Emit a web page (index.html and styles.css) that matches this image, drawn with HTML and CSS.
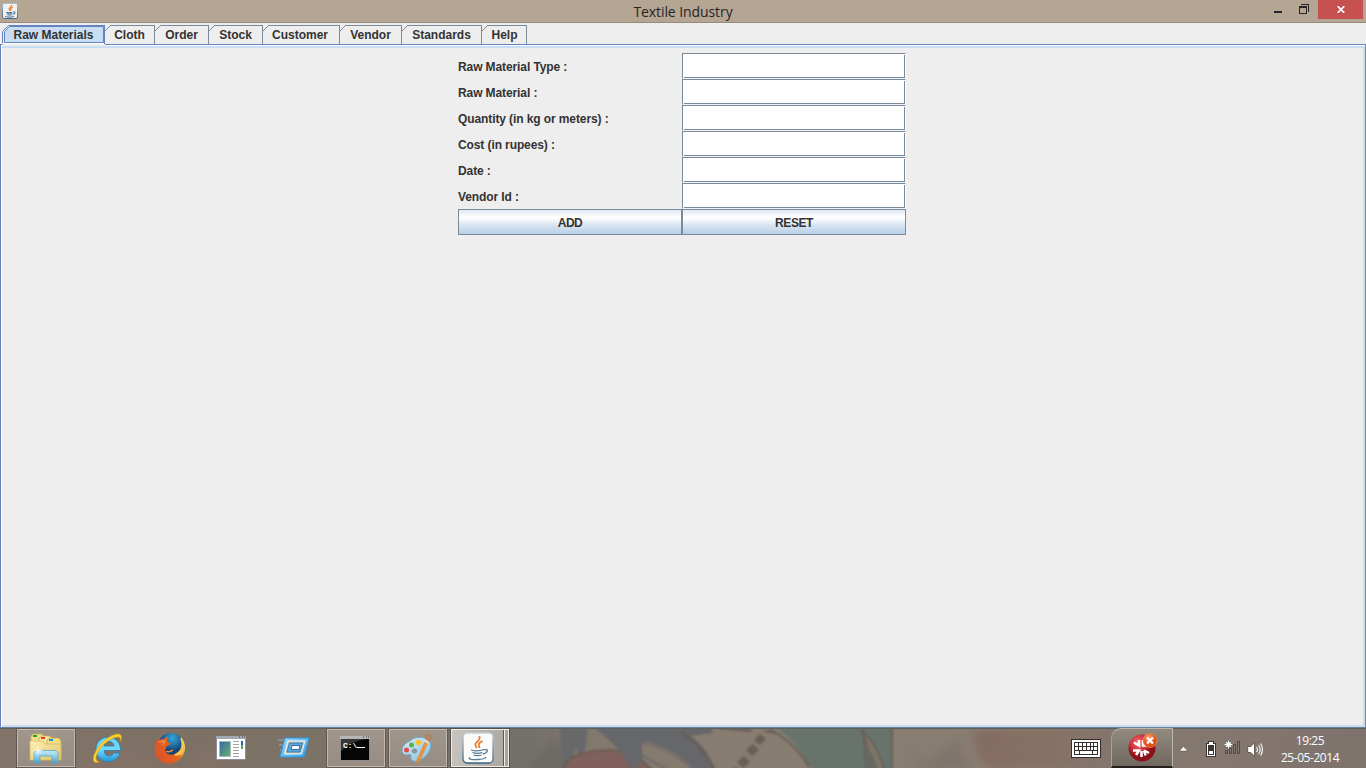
FILE: index.html
```html
<!DOCTYPE html>
<html lang="en">
<head>
<meta charset="utf-8">
<title>Textile Industry</title>
<link rel="stylesheet" href="styles.css">
</head>
<body>
<div class="screen">
  <header class="titlebar">
    <svg class="app-icon" width="16" height="16" viewBox="0 0 16 16">
      <defs><linearGradient id="jb" x1="0" y1="0" x2="0" y2="1"><stop offset="0" stop-color="#a9bfd0"/><stop offset="1" stop-color="#466984"/></linearGradient></defs>
      <rect x=".5" y=".5" width="15" height="15" rx="1.5" fill="#f0f0ee" stroke="url(#jb)"/>
      <path d="M9.7 2C10 4 6.2 4.6 7.2 6.3L8.4 8M11 4.2C8.8 5 8.2 6 9.1 7.8" fill="none" stroke="#e77b32" stroke-width="1.2"/>
      <path d="M4 9.5h6.500M4.700 10.800h5.600M5.400 12h4.300M3 13.500c2.500.6 7 .6 9-.3M11 9c3-1 2.500 2-.2 2.300" fill="none" stroke="#557d9d" stroke-width="1.100"/>
    </svg>
    <h1 class="title">Textile Industry</h1>
    <div class="win-buttons">
      <svg class="win-min" width="8" height="2"><path d="M0 0h8v2H0z" fill="#252525"/></svg>
      <svg class="win-max" width="10" height="10" shape-rendering="crispEdges"><path d="M0 2h8v8H0zM1 4v5h6V4zM2 0h8v8H9V1H2z" fill="#252525" fill-rule="evenodd"/></svg>
      <div class="win-close"><svg width="8" height="7" viewBox="0 0 8 7"><path d="M.7.2l6.6 6.6M7.3.2L.7 6.800" stroke="#fff" stroke-width="1.700"/></svg></div>
    </div>
  </header>

  <nav class="tabs">
    <div class="tab selected w-raw"><svg class="selected-shape" width="103" height="22"><path d="M.5 22V7.500L7.500.5H103V22z" fill="#eee"/><path d="M.5 19V7.500L6.500 1.500H103" fill="none" stroke="#6382bf"/><path d="M2.500 18.500V7.500L7.500 2.500H101.500V18.500z" fill="#c8ddf2" stroke="#6382bf"/><path d="M102.500 2v18" stroke="#6382bf"/><path d="M3 19.500h99" stroke="#fff"/><path d="M1 20.500h102" stroke="#eee"/></svg><span>Raw Materials</span></div>
    <div class="tab w-cloth"><svg class="corner" width="6" height="7"><path d="M0 6L5.500.5" stroke="#7a8a99"/></svg><span>Cloth</span></div>
    <div class="tab w-order"><svg class="corner" width="6" height="7"><path d="M0 6L5.500.5" stroke="#7a8a99"/></svg><span>Order</span></div>
    <div class="tab w-stock"><svg class="corner" width="6" height="7"><path d="M0 6L5.500.5" stroke="#7a8a99"/></svg><span>Stock</span></div>
    <div class="tab w-customer"><svg class="corner" width="6" height="7"><path d="M0 6L5.500.5" stroke="#7a8a99"/></svg><span>Customer</span></div>
    <div class="tab w-vendor"><svg class="corner" width="6" height="7"><path d="M0 6L5.500.5" stroke="#7a8a99"/></svg><span>Vendor</span></div>
    <div class="tab w-standards"><svg class="corner" width="6" height="7"><path d="M0 6L5.500.5" stroke="#7a8a99"/></svg><span>Standards</span></div>
    <div class="tab w-help"><svg class="corner" width="6" height="7"><path d="M0 6L5.500.5" stroke="#7a8a99"/></svg><span>Help</span></div>
  </nav>

  <main class="pane">
    <div class="form">
      <label>Raw Material Type :</label><div class="field"><i></i></div>
      <label>Raw Material :</label><div class="field"><i></i></div>
      <label>Quantity (in kg or meters) :</label><div class="field"><i></i></div>
      <label>Cost (in rupees) :</label><div class="field"><i></i></div>
      <label>Date :</label><div class="field"><i></i></div>
      <label>Vendor Id :</label><div class="field"><i></i></div>
      <button class="push">ADD</button><button class="push">RESET</button>
    </div>
  </main>

  <footer class="taskbar">
    <svg class="wallpaper" width="1366" height="40" viewBox="0 0 1366 40">
      <defs>
        <linearGradient id="tb"><stop offset="0" stop-color="#83746a"/><stop offset=".12" stop-color="#7d7065"/><stop offset=".24" stop-color="#7b7366"/><stop offset=".39" stop-color="#74706a"/><stop offset=".42" stop-color="#80776c"/><stop offset=".47" stop-color="#867c70"/><stop offset=".73" stop-color="#897e72"/><stop offset=".79" stop-color="#84776c"/><stop offset=".9" stop-color="#83776f"/><stop offset="1" stop-color="#7e726d"/></linearGradient>
        <linearGradient id="skin"><stop offset="0" stop-color="#836c60"/><stop offset=".5" stop-color="#877164"/><stop offset="1" stop-color="#83766d"/></linearGradient>
        <filter id="soft" x="-5%" y="-20%" width="110%" height="140%" color-interpolation-filters="sRGB"><feGaussianBlur stdDeviation="1.100"/></filter>
        <filter id="softer" x="-20%" y="-50%" width="140%" height="200%" color-interpolation-filters="sRGB"><feGaussianBlur stdDeviation="5"/></filter>
      </defs>
      <rect width="1366" height="40" fill="url(#tb)"/>
      <path d="M60 44l60-25 80 25zM180 44l30-30 25 30z" fill="#8c7267" opacity=".4" filter="url(#softer)"/>
      <path d="M525 46l30-40 20 40z" fill="#696762" opacity=".7" filter="url(#softer)"/>
      <g filter="url(#soft)">
        <path d="M560 -3h28l-3 25-7 8-1-12-10 24-5 2z" fill="#67686a"/>
        <path d="M560 46l9-15c20-11 50-11 68-4l19 19z" fill="#80605a" stroke="#6d5b52" stroke-width="2"/>
        <path d="M594 -3h118v8l-22 3c15 10 20 20 27 38h-18c-17-19-32-27-54-33l-4 24-10 4c-8-17-22-31-37-41z" fill="#65676b"/>
        <path d="M641 14c24 5 41 15 57 32h-23l-34-19z" fill="#847a6d" stroke="#69656a" stroke-width="1.500"/>
        <path d="M681 4c15 9 26 22 36 42" fill="none" stroke="#6b5a51" stroke-width="2"/>
        <path d="M719 0l33 3-14-5zM764 3l12 2" fill="#6c5e58" stroke="#6c5e58" stroke-width="2"/>
        <path d="M754 12l6-6 6 5-6 6zM746 22l7-6 6 6-7 6zM737 34l7-6 6 6-7 6zM729 44l6-5 5 4-4 5z" fill="#6a5e55"/>
        <path d="M774 -3h118v50h-79c-9-20-18-34-39-50z" fill="#67736b"/>
        <path d="M768 0c24 13 35 28 45 46M863 2l4 44M892 -2v48" fill="none" stroke="#665b54" stroke-width="1.500"/>
        <path d="M861 2c12 10 20 26 24 44h-16c2-14-1-30-8-44z" fill="#7e746a" stroke="#665b54" stroke-width="1.200"/>
        <path d="M871 24c4 7 6 13 6 22h-9z" fill="#66685f"/>
        <path d="M808 44l2-7 5 7z" fill="#8b7568"/>
      </g>
      <path d="M974 0h140v40H990l-14-13z" fill="url(#skin)" filter="url(#softer)"/>
      <path d="M910 24l12 18h55l-25-27-25 20zM949 14l12-3 2 8-8 3z" fill="#7a6e68" opacity=".6" filter="url(#softer)"/>
      <path d="M0 .5h1366" stroke="#5b605f"/>
    </svg>

    <div class="tasks">
      <div class="task open">
        <svg class="explorer" width="34" height="32" viewBox="0 0 34 32">
          <defs><linearGradient id="fo" x1="0" y1="0" x2="1" y2="1"><stop offset="0" stop-color="#fff1b5"/><stop offset="1" stop-color="#e0c364"/></linearGradient><linearGradient id="st" x1="0" y1="0" x2="0" y2="1"><stop offset="0" stop-color="#c3ebf8"/><stop offset=".5" stop-color="#8fcbe5"/><stop offset="1" stop-color="#4c9dc4"/></linearGradient></defs>
          <path d="M3 4l2-2h9l2 3v22H3z" fill="#f5df8b" stroke="#cead57" stroke-width=".8"/>
          <path d="M11 6l2-2h9l2 3v20H11z" fill="#f8e8a4" stroke="#cead57" stroke-width=".8"/>
          <path d="M19 8l2-2h10l2 3v19H19z" fill="#f2dc86" stroke="#c9a850" stroke-width=".8"/>
          <path d="M2 9h13l2 3h16v16H2z" fill="url(#fo)" stroke="#d5b75f" stroke-width=".8"/>
          <path d="M5 3h4v2H5z" fill="#15a526"/><path d="M13 5h4v2h-4z" fill="#d84224"/><path d="M21 7h4v2h-4z" fill="#1990dc"/>
          <path d="M6 31V20.500l2-2h20l2 2V31h-6v-7H12v7z" fill="url(#st)" stroke="#5ea7c6" stroke-width=".8"/>
          <path d="M10 14v9M5.500 18.500h9M7 15.500l6 6m0-6l-6 6" stroke="#fff" stroke-width=".8" opacity=".9"/>
        </svg>
      </div>
      <div class="task">
        <svg class="nudge" width="32" height="32" viewBox="0 0 32 32">
          <defs><linearGradient id="ie" x1="0" y1="0" x2="0" y2="1"><stop offset="0" stop-color="#6fd0f8"/><stop offset=".5" stop-color="#72d9fb"/><stop offset="1" stop-color="#2594d3"/></linearGradient></defs>
          <path d="M29.500 18.500H13c.5 6.500 7.500 7 9.500 2.500h6.500C25 34 5 32 5 17.500 5 1 30 1 29.500 18.500zM13 14h10c-.5-6-9-6-10 0z" fill="url(#ie)" stroke="#2583b5" stroke-width=".8"/>
          <path d="M8 30C2 32 1 27 4 21 8 11 20 2 27 2c4 0 4 4 2 8 1-4 0-5.500-3-5C19 6 9 14 6 22c-2 5-1 7 2 8z" fill="#ffd52c" stroke="#dba51e" stroke-width=".7"/>
        </svg>
      </div>
      <div class="task">
        <svg width="32" height="32" viewBox="0 0 32 32">
          <defs><radialGradient id="fx" cx=".55" cy=".2"><stop offset="0" stop-color="#38a7d9"/><stop offset="1" stop-color="#124479"/></radialGradient><linearGradient id="fr" x1="0" y1=".6" x2="1" y2=".2"><stop offset="0" stop-color="#dc5428"/><stop offset=".6" stop-color="#e4651e"/><stop offset="1" stop-color="#ffe36a"/></linearGradient></defs>
          <circle cx="17" cy="14" r="13" fill="url(#fx)"/>
          <path d="M3 6l1 3c2-2 4-2 6-2l4-3-1 5 4 3-4 2-2 4c1 6 9 6 14 1 4-4 4-9 2-14 6 7 5 17-1 22C17 36 2 31 1 19 0 14 2 11 3 6z" fill="url(#fr)"/>
          <path d="M27 6c3 9 0 15-6 17 5 0 7-2 8-5" fill="none" stroke="#f9c84e" stroke-width="1.500"/>
          <path d="M5 10l6-1-2 4M12 19c3 2 5 0 7-1" fill="none" stroke="#f08a42" stroke-width="1.500"/>
        </svg>
      </div>
      <div class="task">
        <svg class="nudge" width="32" height="28" viewBox="0 0 32 28">
          <defs><linearGradient id="gb" x1="0" y1="0" x2="1" y2="1"><stop offset="0" stop-color="#3767a5"/><stop offset="1" stop-color="#63b66d"/></linearGradient></defs>
          <path d="M1.500 2.500h29v23h-29z" fill="#fff" stroke="#8b9099"/><path d="M1 2h30v3H1z" fill="#a1a8b2"/><path d="M24 3h1m2 0h1m1 0h1" stroke="#39404b"/>
          <path d="M4.500 7.500h11v15h-11z" fill="url(#gb)" stroke="#a2bbb7"/>
          <path d="M18 7.500h6m-6 3h6m-6 3h6m-6 3h6m-6 3h6m-6 3h6" stroke="#a3a3a3"/><path d="M26 7h2v8h-2z" fill="#2861a1"/><path d="M26 11h2v4h-2z" fill="#4bab75"/>
        </svg>
      </div>
      <div class="task">
        <svg class="nudge" width="34" height="28" viewBox="0 0 34 28">
          <defs><linearGradient id="rn" x1="0" y1="0" x2="1" y2="1"><stop offset="0" stop-color="#a8dcf6"/><stop offset="1" stop-color="#2b9ff0"/></linearGradient></defs>
          <path d="M2 6h8M3 11h6M4 16h5M6 22h3" stroke="#8fb7c8" stroke-width="1.500" opacity=".6"/>
          <path d="M9 4h24l-5 19H4z" fill="url(#rn)" stroke="#3295d8"/><path d="M12 7h17l-3.500 13H8.500z" fill="#d3c8b8" stroke="#e7f8ff"/><path d="M13.500 9h13l-2.500 9H11z" fill="#5aacdf" stroke="#337dad"/><path d="M16 11.500h8l-1 4h-8z" fill="#fff" stroke="#356b9c"/>
        </svg>
      </div>
      <div class="task open">
        <svg class="nudge" width="32" height="28" viewBox="0 0 32 28">
          <path d="M1.500 2.500h29v24h-29z" fill="#050505" stroke="#8b8d91"/><path d="M1 2h30v3H1z" fill="#b5b7ba"/><path d="M24 3h1m2 0h1m1 0h1" stroke="#333"/><path d="M2 5h26Q14 6 2 17z" fill="#444" opacity=".8"/>
          <text x="4" y="14" class="cmd-text">C:\</text><path d="M18 13.500h8" stroke="#fff"/>
        </svg>
      </div>
      <div class="task open">
        <svg class="paint" width="34" height="34" viewBox="0 0 34 34">
          <defs><linearGradient id="pa" x1="0" y1="0" x2="1" y2="1"><stop offset="0" stop-color="#d9eefb"/><stop offset="1" stop-color="#8dbddb"/></linearGradient></defs>
          <path d="M10 10C14 5 27 5 30 11c3 7-4 17-13 19-4 1-7-1-6-5 0-3-3-1-5-1-7-1-4-11 4-14zM12 20c0 3 5 3 5 0s-5-3-5 0z" fill="url(#pa)" stroke="#6aaccf"/>
          <circle cx="6.500" cy="19" r="2.500" fill="#e44c3e"/><circle cx="11.500" cy="14" r="2.500" fill="#54b940"/><circle cx="18.500" cy="11.500" r="2.800" fill="#f8c12d"/>
          <path d="M25.500 10L17 29l-.5 4 3.500-4 8-18z" fill="#f29431" stroke="#cf7a2b" stroke-width=".6"/><path d="M24 3l3 1 2-3 1 3 4 1-5 6-4-3z" fill="#ae8662"/><path d="M25 8l4 3-1 2-4-3z" fill="#dfdcd4"/>
        </svg>
      </div>
      <div class="task current">
        <svg class="java" width="32" height="32" viewBox="0 0 32 32">
          <defs><linearGradient id="js" x1="0" y1="0" x2="0" y2="1"><stop offset="0" stop-color="#c3ced5"/><stop offset="1" stop-color="#34627f"/></linearGradient></defs>
          <rect x="1" y="1" width="30" height="30" rx="4" fill="#fbfbfa" stroke="url(#js)" stroke-width="1.300"/>
          <path d="M17.500 4c2 6-8 6-2.500 12M20.500 9c-6 3-3 4-3 7" fill="none" stroke="#e87728" stroke-width="1.700"/>
          <path d="M9 18c3 1 9 1 13-.5M10.500 20.500c3 1 7 1 10 0M11.500 23c3 1 5 1 8 0M8 25.500c-3 2 3 2.500 8 2 5 0 7-1 8-2.500M22 18c5-2 4 3-1 4" fill="none" stroke="#527995" stroke-width="1.300"/>
        </svg>
      </div>
    </div>

    <div class="tray">
      <svg class="keyboard" width="30" height="19" viewBox="0 0 30 19" shape-rendering="crispEdges">
        <rect width="30" height="19" rx="1" fill="#332e2b"/><rect x="1" y="1" width="28" height="17" fill="#fff"/><rect x="3" y="3" width="24" height="13" fill="#332e2b"/>
        <path d="M4 4h3v3H4zm4 0h3v3H8zm4 0h3v3h-3zm4 0h3v3h-3zm4 0h2v3h-2zm3 0h3v3h-3zM4 8h3v3H4zm4 0h3v3H8zm4 0h3v3h-3zm4 0h3v3h-3zm4 0h2v3h-2zm3 0h3v3h-3zM4 12h4v3H4zm5 0h12v3H9zm13 0h4v3h-4z" fill="#fff"/>
      </svg>
      <div class="notice">
        <svg width="32" height="32" viewBox="0 0 32 32">
          <defs><radialGradient id="rd" cx=".38" cy=".3"><stop offset="0" stop-color="#f4777b"/><stop offset=".6" stop-color="#d32f3a"/><stop offset="1" stop-color="#8e1019"/></radialGradient><radialGradient id="or" cx=".4" cy=".3"><stop offset="0" stop-color="#ffa26b"/><stop offset="1" stop-color="#e04c16"/></radialGradient></defs>
          <circle cx="16" cy="16" r="13.500" fill="url(#rd)"/>
          <path d="M8 10.500l5 3V8M7 18.500h6l-3 4.500M17 8v5.500h5M15.500 25v-6M18 18.500l5 2.500M18 18.500l1.500 5" fill="none" stroke="#fff" stroke-width="2.500"/>
          <circle cx="24" cy="8.500" r="7" fill="url(#or)" stroke="#f0895d" stroke-width=".7"/><path d="M21 5.500l6 6m0-6l-6 6" stroke="#fff" stroke-width="2.300"/>
        </svg>
      </div>
      <svg class="chevron" width="9" height="6"><path d="M.3 5L4.500.5 8.700 5z" fill="#fff" stroke="#514b48" stroke-width=".5"/></svg>
      <svg class="battery" width="10" height="16" viewBox="0 0 10 16" shape-rendering="crispEdges"><path d="M2 0h6v2h2v14H0V2h2z" fill="#3b3532"/><path d="M3 1h4v2h2v12H1V3h2z" fill="#fff"/><path d="M3 4h4v6H3z" fill="#3b3532"/><path d="M2 4h1v10H2zM7 4h1v10H7zM3 13h4v1H3z" fill="#3b3532"/></svg>
      <svg class="network" width="17" height="15" viewBox="0 0 17 15"><path d="M1.500 10.500h2v3h-2zM5.500 8.500h2v5h-2zM9.500 4.500h2v9h-2zM13.500 1.500h2v12h-2z" fill="#847b75" stroke="#4b4541" stroke-width=".9"/><path d="M4.500.5v8M.5 4.500h8M1.700 1.700l5.600 5.600m0-5.600L1.700 7.300" stroke="#4b4541" stroke-width="2.200"/><path d="M4.500.5v8M.5 4.500h8M2 2l5 5m0-5L2 7" stroke="#fff" stroke-width="1.300"/></svg>
      <svg class="speaker" width="17" height="15" viewBox="0 0 17 15"><path d="M.7 4.500h3L7.500.8v13.400L3.700 10.500h-3z" fill="#fff" stroke="#504945" stroke-width=".8"/><path d="M9.500 5q2 2.500 0 5M11.500 3q3.500 4.500 0 9M13.700 1.500q3.500 6 0 12" fill="none" stroke="#f3f1ef" stroke-width="1.200"/></svg>
      <div class="clock"><span class="time">19:25</span><span class="date">25-05-2014</span></div>
    </div>
  </footer>
</div>
</body>
</html>
```
FILE: styles.css
```css
* { box-sizing: border-box; }
body { margin: 0; overflow: hidden; font-family: "Liberation Sans", Arial, sans-serif; }
svg { display: block; flex: none; }
.screen { width: 1366px; height: 768px; display: flex; flex-direction: column; background: #eee; }

.titlebar { height: 23px; flex: none; display: grid; grid-template-columns: 180px 1fr 180px; background: #b5a593; border-bottom: 1px solid #998a7b; }
.app-icon { margin: 3px 0 0 2px; }
.title { margin: 0; padding-top: 1px; text-align: center; font: 400 14px/22px "Open Sans", "Noto Sans", sans-serif; letter-spacing: -.08px; color: #252525; }
.win-buttons { display: flex; }
.win-min { margin: 11px 0 0 88px; }
.win-max { margin: 4px 0 0 17px; }
.win-close { margin-left: 9px; width: 45px; height: 19px; background: #c75050; display: flex; align-items: center; justify-content: center; }

.tabs { height: 21px; flex: none; padding: 2px 0 0 2px; display: flex; }
.tab { position: relative; height: 19px; font-size: 12px; font-weight: bold; line-height: 21px; color: #333; border-right: 1px solid #7a8a99; text-align: center; white-space: nowrap; }
.tab:not(.selected)::before { content: ""; position: absolute; left: 5px; right: 0; top: 0; height: 1px; background: #7a8a99; }
.corner { position: absolute; left: 0; top: 0; }
.tab span { position: relative; }
.selected { border: 0; z-index: 1; }
.selected-shape { position: absolute; left: 0; top: -1px; }
.w-raw { width: 103px; }
.w-cloth { width: 50px; }
.w-order { width: 54px; }
.w-stock { width: 54px; }
.w-customer { width: 77px; padding-right: 2px; }
.w-vendor { width: 62px; }
.w-standards { width: 80px; }
.w-help { width: 45px; padding-left: 1px; }

.pane { height: 684px; flex: none; padding: 8px 0 0 457px; border: 1px solid #6382bf; border-right-color: #7a8a99; border-bottom-color: #6b7f95; box-shadow: inset 1px 1px #fff, inset 0 3px #c8ddf2, inset -2px -2px #c8ddf2; }
.form { display: grid; grid-template-columns: 224px 224px; grid-auto-rows: 26px; }
.form label { font-size: 12px; font-weight: bold; line-height: 28px; letter-spacing: -.1px; color: #333; white-space: nowrap; }
.field { background: #fff; height: 26px; padding: 1px 0 0 1px; border-top: 1px solid #7a8a99; border-left: 1px solid #7a8a99; border-right: 1px solid #f8fbff; border-bottom: 1px solid #eef4fb; }
.field i { display: block; height: 23px; border-right: 1px solid #7a8a99; border-bottom: 1px solid #7a8a99; }
.push { font: bold 12px/24px "Liberation Sans", Arial, sans-serif; letter-spacing: -.45px; color: #333; padding: 1px 0 0; border: 1px solid #7a8a99; border-radius: 0; background: linear-gradient(#dde8f3, #fff 30%, #fff 34%, #dce7f3 60%, #b8cfe5); }

.taskbar { position: relative; height: 40px; flex: none; display: flex; justify-content: space-between; overflow: hidden; }
.wallpaper { position: absolute; left: 0; top: 0; }
.tasks { position: relative; display: flex; padding-left: 15px; }
.task { width: 60px; height: 40px; margin-right: 2px; padding-left: 1px; display: flex; align-items: center; justify-content: center; }
.task.open { width: 58px; margin: 1px 2px 0; height: 38px; padding: 0; border: 1px solid #c0b9b2; outline: 1px solid #61584f; background: linear-gradient(#a0968b, #978c83); }
.task.current { width: 58px; margin: 1px 2px 0; height: 38px; border: 1px solid #eeece8; outline: 1px solid #554f49; background: linear-gradient(100deg, #c8c4bf, #aaa59e); padding-right: 5px; box-shadow: inset -3px 0 #aaa39b, inset -4px 0 #eeece8, inset -5px 0 #615951; }
.explorer { margin-right: 2px; }
.nudge { margin-right: 2px; }
.java { margin-right: 0; }
.paint { margin-right: 2px; }
.tray { position: relative; width: 295px; display: flex; }
.keyboard { margin-top: 11px; }
.notice { margin-left: 10px; width: 62px; height: 40px; border: 1px solid #bdb5ae; border-bottom: 2px solid #26201d; border-left-color: #aaa29a; border-radius: 10px 0 0; background: linear-gradient(#918a7d, #70685f); display: flex; justify-content: center; padding-top: 3px; }
.chevron { margin: 18px 0 0 6px; }
.battery { margin: 13px 0 0 18px; }
.network { margin: 12px 0 0 8px; }
.speaker { margin: 14px 0 0 6px; }
.clock { margin-left: 6px; width: 80px; padding-top: 4px; display: flex; flex-direction: column; align-items: center; font: 12px/17px "Open Sans", "Noto Sans", sans-serif; color: #fff; white-space: nowrap; }
.time, .date { letter-spacing: -.45px; }
.cmd-text { font: bold 8px "Liberation Mono", monospace; fill: #fff; }
```
